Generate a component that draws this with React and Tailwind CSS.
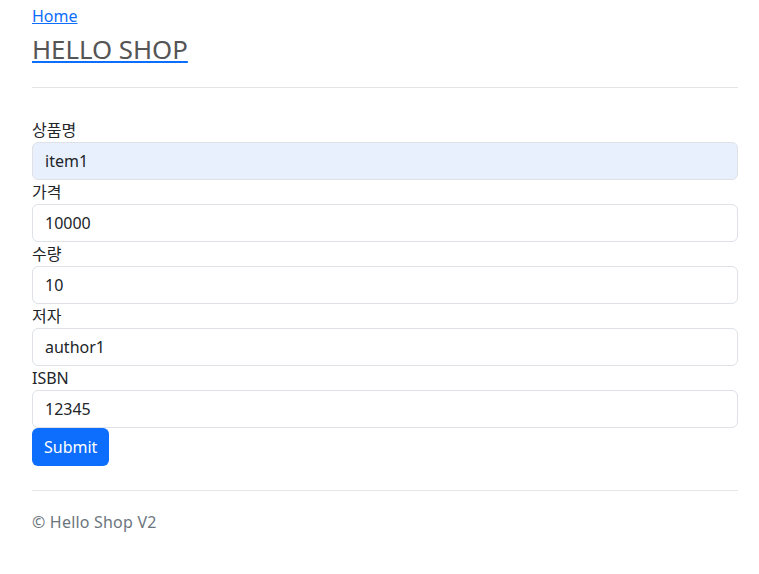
export default function App() {
  const fields = [
    { label: "상품명", value: "item1", autofill: true },
    { label: "가격", value: "10000" },
    { label: "수량", value: "10" },
    { label: "저자", value: "author1" },
    { label: "ISBN", value: "12345" },
  ];

  return (
    <div
      className="min-h-screen bg-white text-[#212529] text-base leading-6"
      style={{ fontFamily: '"Noto Sans", "Noto Sans CJK KR", sans-serif' }}
    >
      <div className="ml-8 mr-[21px]">
        {/* 헤더 */}
        <div className="pt-1">
          <a href="#" className="text-[#0d6efd] underline">
            Home
          </a>
          <a href="#" className="block w-fit mt-[6px] underline decoration-[#0d6efd]">
            <h3 className="text-[25.8px] leading-[31px] text-[#555]">HELLO SHOP</h3>
          </a>
        </div>
        <hr className="mt-[22px] border-t border-[#e5e5e5]" />

        {/* 폼 */}
        <form className="mt-[30px]" onSubmit={(e) => e.preventDefault()}>
          {fields.map((f) => (
            <div key={f.label}>
              <label className="block leading-6">{f.label}</label>
              <input
                defaultValue={f.value}
                className={`block w-full h-[38px] px-3 rounded-[6px] border border-[#dee2e6] outline-none text-[#212529] ${
                  f.autofill ? "bg-[#e8f0fe]" : "bg-white"
                }`}
              />
            </div>
          ))}
          <button
            type="submit"
            className="block h-[38px] px-3 rounded-[6px] bg-[#0d6efd] text-white"
          >
            Submit
          </button>
        </form>

        {/* 푸터 */}
        <hr className="mt-[24px] border-t border-[#e5e5e5]" />
        <footer className="pt-[19px] text-[#6c757d] tracking-[0.2px]">© Hello Shop V2</footer>
      </div>
    </div>
  );
}
